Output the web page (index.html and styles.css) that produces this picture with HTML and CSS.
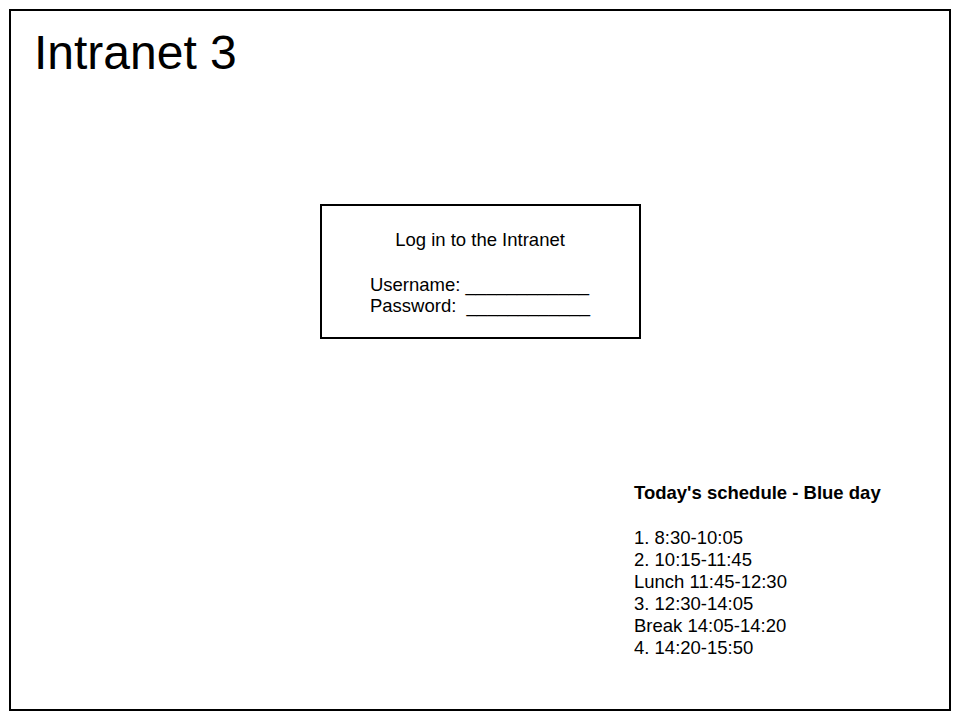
FILE: index.html
```html
<!DOCTYPE html>
<html lang="en">
<head>
<meta charset="utf-8">
<title>Intranet 3</title>
<link rel="stylesheet" href="styles.css">
</head>
<body>
<div class="frame">
  <h1 class="title">Intranet 3</h1>
  <div class="login">
    <p class="login-heading">Log in to the Intranet</p>
    <div class="login-fields">
      <div class="field">Username: ____________</div>
      <div class="field">Password:  ____________</div>
    </div>
  </div>
  <div class="schedule">
    <p class="schedule-heading">Today's schedule - Blue day</p>
    <ul class="schedule-list">
      <li>1. 8:30-10:05</li>
      <li>2. 10:15-11:45</li>
      <li>Lunch 11:45-12:30</li>
      <li>3. 12:30-14:05</li>
      <li>Break 14:05-14:20</li>
      <li>4. 14:20-15:50</li>
    </ul>
  </div>
</div>
</body>
</html>
```

FILE: styles.css
```css
* { box-sizing: border-box; }

html, body {
  margin: 0;
  padding: 0;
  background: #ffffff;
}

body {
  font-family: "Liberation Sans", Arial, sans-serif;
  color: #000000;
}

.frame {
  margin: 9px;
  width: 942px;
  height: 702px;
  border: 2px solid #000000;
  display: flex;
  flex-direction: column;
}

.title {
  margin: 0;
  padding: 14px 0 0 23px;
  font-size: 48px;
  font-weight: normal;
  line-height: 56px;
}

.login {
  align-self: center;
  margin-top: 123px;
  width: 321px;
  height: 135px;
  border: 2px solid #000000;
  display: flex;
  flex-direction: column;
  align-items: center;
  padding-top: 23px;
  font-size: 18.5px;
  line-height: 21px;
}

.login-heading {
  margin: 0 0 24px 0;
}

.login-fields {
  display: flex;
  flex-direction: column;
}

.field {
  white-space: pre;
}

.schedule {
  margin-top: 143px;
  margin-left: 623px;
  font-size: 18.5px;
  line-height: 22px;
}

.schedule-heading {
  margin: 0 0 23px 0;
  font-weight: bold;
}

.schedule-list {
  list-style: none;
  margin: 0;
  padding: 0;
}
```
